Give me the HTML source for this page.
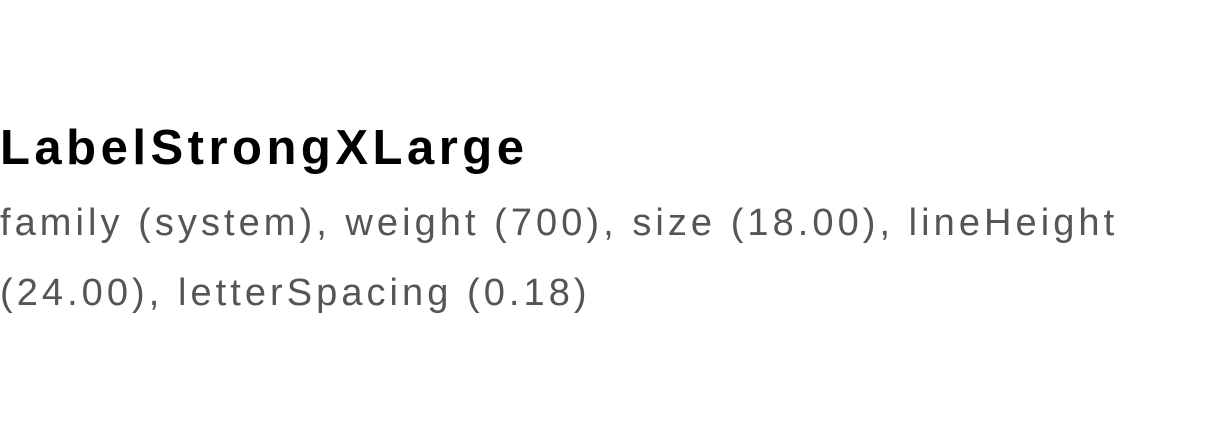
<!DOCTYPE html>
<html><head><meta charset="utf-8"><style>
html,body{margin:0;padding:0;background:#fff;width:1206px;height:430px;overflow:hidden}
body{font-family:"Liberation Sans",sans-serif}
.t{position:absolute;left:0;top:116px;font-size:49px;font-weight:700;color:#000;line-height:64px;letter-spacing:4.5px;white-space:nowrap}
.d{position:absolute;left:0;top:188px;font-size:38px;color:#555;line-height:70px;letter-spacing:4.05px;white-space:nowrap}
</style></head><body>
<div class="t">LabelStrongXLarge</div>
<div class="d">family (system), weight (700), size (18.00), lineHeight<br>(24.00), letterSpacing (0.18)</div>
</body></html>
